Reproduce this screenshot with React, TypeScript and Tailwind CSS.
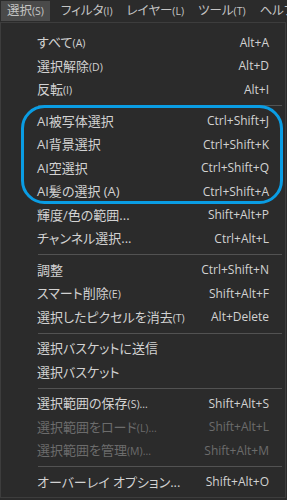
type Item =
  | { sep: true }
  | { label: string; key?: string; hint?: string; off?: boolean; sep?: false };

const menuBar = [
  { label: '選択', key: '(S)', active: true },
  { label: 'フィルタ', key: '(I)' },
  { label: 'レイヤー', key: '(L)' },
  { label: 'ツール', key: '(T)' },
  { label: 'ヘルプ', key: '(H)' },
];

const items: Item[] = [
  { label: 'すべて', key: '(A)', hint: 'Alt+A' },
  { label: '選択解除', key: '(D)', hint: 'Alt+D' },
  { label: '反転', key: '(I)', hint: 'Alt+I' },
  { sep: true },
  { label: 'AI被写体選択', hint: 'Ctrl+Shift+J' },
  { label: 'AI背景選択', hint: 'Ctrl+Shift+K' },
  { label: 'AI空選択', hint: 'Ctrl+Shift+Q' },
  { label: 'AI髪の選択 (A)', hint: 'Ctrl+Shift+A' },
  { label: '輝度/色の範囲...', hint: 'Shift+Alt+P' },
  { label: 'チャンネル選択...', hint: 'Ctrl+Alt+L' },
  { sep: true },
  { label: '調整', hint: 'Ctrl+Shift+N' },
  { label: 'スマート削除', key: '(E)', hint: 'Shift+Alt+F' },
  { label: '選択したピクセルを消去', key: '(T)', hint: 'Alt+Delete' },
  { sep: true },
  { label: '選択バスケットに送信' },
  { label: '選択バスケット' },
  { sep: true },
  { label: '選択範囲の保存', key: '(S)...', hint: 'Shift+Alt+S' },
  { label: '選択範囲をロード', key: '(L)...', hint: 'Shift+Alt+L', off: true },
  { label: '選択範囲を管理', key: '(M)...', hint: 'Shift+Alt+M', off: true },
  { sep: true },
  { label: 'オーバーレイ オプション...', hint: 'Shift+Alt+O' },
];

export default function App() {
  return (
    <div className="relative h-[500px] w-[287px] overflow-hidden bg-[#2b2b2b] font-['Open_Sans','Noto_Sans_CJK_JP',sans-serif] [font-feature-settings:'palt'] text-[#d2d2d2]">
      <div className="flex h-[22px] items-center gap-[8px] pl-[1px] text-[12.5px] leading-none text-[#c4c4c4]">
        {menuBar.map((m) => (
          <div
            key={m.label}
            className={
              m.active
                ? 'flex h-[20px] shrink-0 items-center bg-[#4a4a4a] px-[6px]'
                : 'flex h-[20px] shrink-0 items-center px-[3px]'
            }
          >
            {m.label}
            <span className="text-[10.5px]">{m.key}</span>
          </div>
        ))}
      </div>

      <div className="h-[476px] w-[286px] border border-[#3d3d3d] bg-[#2b2b2b] pt-[8px]">
        {items.map((it, i) =>
          it.sep ? (
            <div key={i} className="flex h-[8px] items-center">
              <div className="ml-[37px] h-px w-[244px] bg-[#525252]" />
            </div>
          ) : (
            <div
              key={i}
              className={
                it.off
                  ? 'flex h-[23.5px] items-center justify-between pl-[36px] pr-[16px] text-[#6c6c6c]'
                  : 'flex h-[23.5px] items-center justify-between pl-[36px] pr-[16px]'
              }
            >
              <span className="text-[13px] leading-none">
                {it.label}
                {it.key && <span className="text-[10.5px]">{it.key}</span>}
              </span>
              <span className="text-[12px] leading-none">{it.hint}</span>
            </div>
          ),
        )}
      </div>

      <svg className="pointer-events-none absolute left-0 top-0" width="287" height="500">
        <rect x="22.5" y="106.5" width="259" height="96" rx="22" fill="none" stroke="#0a9de4" strokeWidth="3" />
      </svg>
    </div>
  );
}
